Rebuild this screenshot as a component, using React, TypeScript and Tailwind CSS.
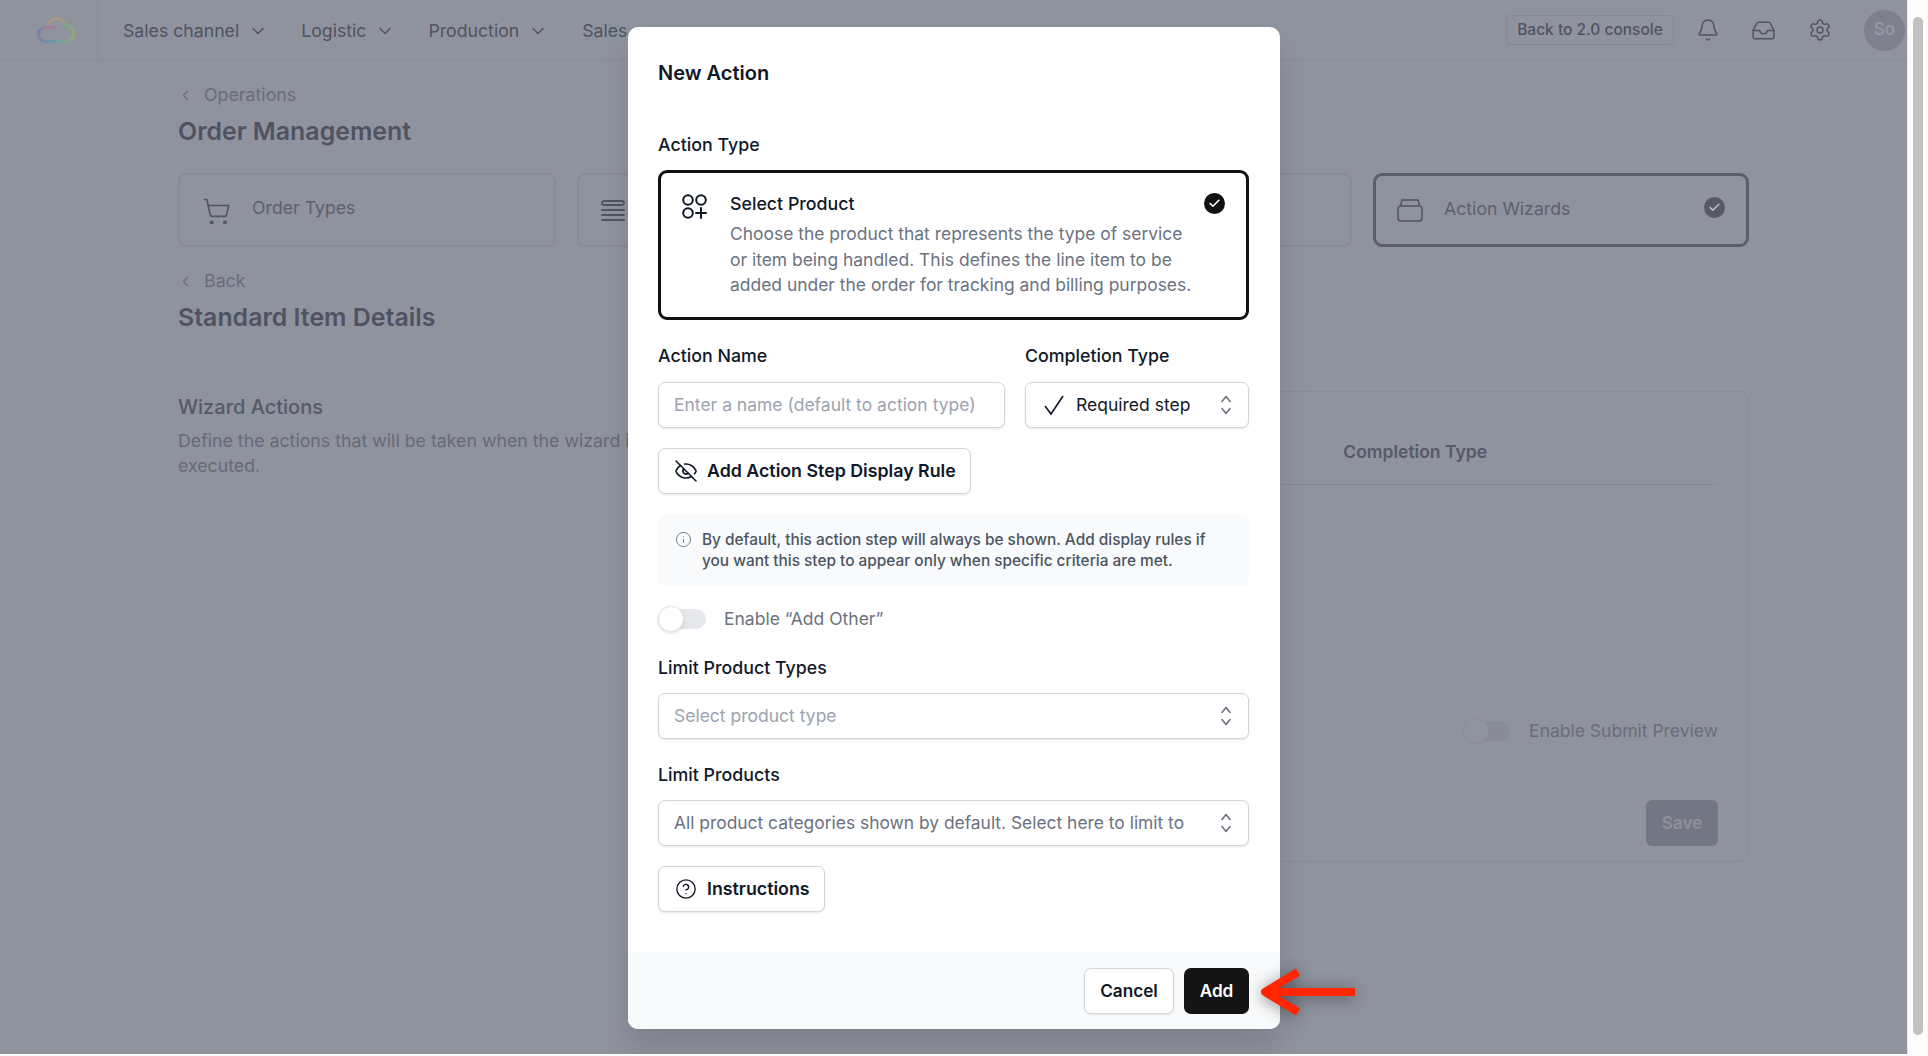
import React from "react";
import { ChevronDown, ChevronLeft, Check, Bell, Inbox, Settings, ShoppingCart, Info, CircleHelp, EyeOff } from "lucide-react";

const F = "font-['Inter','Liberation_Sans',sans-serif]";

function Updown() {
  return (
    <svg width="14" height="24" viewBox="0 0 14 24" fill="none" stroke="#6b7280" strokeWidth="1.6" strokeLinecap="round" strokeLinejoin="round" className="shrink-0">
      <path d="M3 8.5 L7 3.5 L11 8.5" />
      <path d="M3 15.5 L7 20.5 L11 15.5" />
    </svg>
  );
}

function NavItem({ label, gap }: { label: string; gap: string }) {
  return (
    <div className={`flex items-center gap-[9px] ${gap}`}>
      <span className="text-[17.7px] text-[#50545f]">{label}</span>
      <ChevronDown size={20} strokeWidth={1.6} className="text-[#50545f]" />
    </div>
  );
}

function Logo() {
  return (
    <svg width="38" height="26" viewBox="0 0 38 26" fill="none" strokeWidth="3" strokeLinecap="round">
      <defs>
        <linearGradient id="lg" x1="0" y1="0" x2="1" y2="0">
          <stop offset="0" stopColor="#7d7ea8" />
          <stop offset="0.5" stopColor="#6f9ca6" />
          <stop offset="1" stopColor="#8fa878" />
        </linearGradient>
      </defs>
      <path d="M12.5 6.5 C14 3 17 1.5 20 1.5 C24 1.5 27 4.5 28 8" stroke="#a89a82" />
      <path d="M28 8 C32.5 8 36.5 11 36.5 16 C36.5 21 32.5 24.5 28 24.5 L9 24.5 C5 24.5 1.5 21.5 1.5 17 C1.5 13 5 10.5 8.5 10.5" stroke="url(#lg)" />
      <path d="M8.5 10.5 L17.5 10.5" stroke="#a67e96" />
    </svg>
  );
}

function TopBar() {
  return (
    <div className="flex h-[61px] items-stretch border-b border-[#878b96]">
      <div className="flex w-[98px] items-center justify-center border-r border-[#8a8e99] pl-[14px]">
        <Logo />
      </div>
      <div className="flex items-center pl-[25px] pt-[2px]">
        <NavItem label="Sales channel" gap="mr-[33px]" />
        <NavItem label="Logistic" gap="mr-[33px]" />
        <NavItem label="Production" gap="mr-[34px]" />
        <span className="text-[17.7px] text-[#50545f]">Sales</span>
      </div>
      <div className="ml-auto flex items-center pr-[2px]">
        <div className="flex h-[30px] w-[168px] items-center justify-center rounded-[4px] border border-[#858994] text-[15.5px] font-medium text-[#50545f]">
          Back to 2.0 console
        </div>
        <Bell size={24} strokeWidth={1.4} className="ml-[22px] text-[#50545f]" />
        <Inbox size={25} strokeWidth={1.4} className="ml-[31px] text-[#50545f]" />
        <Settings size={24} strokeWidth={1.4} className="ml-[32px] text-[#50545f]" />
        <div className="ml-[32px] flex h-[41px] w-[41px] items-center justify-center rounded-full bg-[#7e818d] text-[17px] font-semibold text-[#9497a3]">
          So
        </div>
      </div>
    </div>
  );
}

function Crumb({ label }: { label: string }) {
  return (
    <div className="flex h-[24px] items-center text-[#696d79]">
      <ChevronLeft size={17} strokeWidth={1.5} className="-ml-[1px]" />
      <span className="ml-[10px] text-[17.8px]">{label}</span>
    </div>
  );
}

function Background() {
  return (
    <div className="h-full">
      <TopBar />
      <div className="pl-[178px] pr-[158px]">
        <div className="pt-[22px]">
          <Crumb label="Operations" />
        </div>
        <h1 className="mt-[9px] text-[24.9px] font-semibold leading-[30px] text-[#4f5361]">Order Management</h1>
        <div className="mt-[27px] flex gap-[21px]">
          <div className="flex h-[74px] w-[378px] items-start rounded-[8px] border-2 border-[#888c97] pl-[22px] pt-[22px]">
            <ShoppingCart size={29} strokeWidth={1.3} className="text-[#50545f]" />
            <span className="-mt-[2px] ml-[21px] text-[17.7px] text-[#5c606c]">Order Types</span>
          </div>
          <div className="flex h-[74px] w-[775px] rounded-[8px] border-2 border-[#888c97] pl-[22px] pt-[24px]">
            <svg width="24" height="24" viewBox="0 0 24 24" fill="none" stroke="#50545f" strokeWidth="1.8" strokeLinecap="round">
              <rect x="1" y="2" width="22" height="4" rx="2" />
              <path d="M1 11 H23 M1 16 H23 M1 21 H23" />
            </svg>
          </div>
          <div className="flex h-[74px] w-[376px] items-start rounded-[9px] border-[3px] border-[#5a5e6b] pl-[21px] pt-[21px]">
            <svg width="26" height="26" viewBox="0 0 26 26" fill="none" stroke="#50545f" strokeWidth="1.5">
              <rect x="1" y="9" width="24" height="15" rx="3" />
              <path d="M3.5 8.5 L5 3 H21 L22.5 8.5" />
            </svg>
            <span className="-mt-[1px] ml-[21px] text-[17.7px] text-[#5c606c]">Action Wizards</span>
            <div className="ml-auto mr-[21px] flex h-[21px] w-[21px] items-center justify-center rounded-full bg-[#565a67]">
              <Check size={13} strokeWidth={2.4} className="text-[#c9cbd1]" />
            </div>
          </div>
        </div>
        <div className="mt-[22px]">
          <Crumb label="Back" />
        </div>
        <h2 className="mt-[9px] text-[24.9px] font-semibold leading-[30px] text-[#4f5361]">Standard Item Details</h2>
        <div className="mt-[59px] flex">
          <div className="w-[480px] pt-[4px]">
            <div className="text-[20px] font-medium leading-[25px] text-[#565a67]">Wizard Actions</div>
            <p className="mt-[8px] text-[17.75px] leading-[25px] text-[#666a76]">
              Define the actions that will be taken when the wizard is executed.
            </p>
          </div>
          <div className="ml-auto flex h-[471px] w-[640px] flex-col rounded-[10px] border border-[#878b96] px-[30px] pt-[47px]">
            <div className="flex h-[46px] justify-end border-b border-[#858994] pr-[231px] text-[17.5px] font-semibold text-[#565a67]">
              Completion Type
            </div>
            <div className="mt-[233px] flex items-center justify-end">
              <div className="relative h-[20px] w-[47px] rounded-full bg-[#888c97]">
                <div className="absolute -top-[3px] left-0 h-[26px] w-[26px] rounded-full border border-[#8a8e99] bg-[#90949f]" />
              </div>
              <span className="ml-[19px] text-[17.5px] text-[#696d79]">Enable Submit Preview</span>
            </div>
            <div className="mt-[56px] flex justify-end">
              <div className="flex h-[46px] w-[72px] items-center justify-center rounded-[6px] bg-[#737783] text-[17.2px] font-semibold text-[#8e919c]">
                Save
              </div>
            </div>
          </div>
        </div>
      </div>
    </div>
  );
}

const fieldBox = "flex h-[46px] items-center rounded-[7px] border border-[#d1d5db] bg-white shadow-[0_1px_2px_rgba(0,0,0,0.1)]";
const label = "text-[17.8px] font-medium leading-[24px] text-[#111827]";
const ghostBtn = "flex h-[46px] items-center rounded-[7px] border border-[#d1d5db] bg-white text-[17.8px] font-semibold text-[#111827] shadow-[0_1px_2px_rgba(0,0,0,0.1)]";

function Modal() {
  return (
    <div className="absolute left-[628px] top-[27px] flex h-[1002px] w-[652px] flex-col overflow-hidden rounded-[10px] bg-white shadow-[0_20px_30px_rgba(0,0,0,0.12)]">
      <div className="flex-1 pl-[30px] pr-[31px]">
        <div className="pt-[33px] text-[20px] font-semibold leading-[26px] text-[#111827]">New Action</div>
        <div className={`mt-[47px] ${label}`}>Action Type</div>
        <div className="mt-[13px] flex h-[150px] items-start rounded-[9px] border-[3px] border-[#111111] pl-[21px] pr-[21px] pt-[18px]">
          <svg width="25" height="25" viewBox="0 0 25 25" fill="none" stroke="#111827" strokeWidth="2" className="mt-[3px] shrink-0" strokeLinecap="round">
            <circle cx="6" cy="6" r="4.8" />
            <circle cx="19" cy="6" r="4.8" />
            <circle cx="6" cy="19" r="4.8" />
            <path d="M19 14 V24 M14 19 H24" />
          </svg>
          <div className="ml-[23px] flex-1">
            <div className="text-[17.8px] font-medium leading-[25px] text-[#111827]">Select Product</div>
            <p className="mt-[5px] w-[465px] text-[17.45px] leading-[25.5px] text-[#6b7280]">
              Choose the product that represents the type of service or item being handled. This defines the line item to be added under the order for tracking and billing purposes.
            </p>
          </div>
          <div className="ml-auto mt-[2px] flex h-[21px] w-[21px] shrink-0 items-center justify-center rounded-full bg-[#111111]">
            <Check size={13} strokeWidth={3} className="text-white" />
          </div>
        </div>

        <div className="mt-[24px] flex gap-[20px]">
          <div className="w-[347px]">
            <div className={label}>Action Name</div>
            <div className={`mt-[14px] px-[15px] ${fieldBox}`}>
              <span className="text-[17.5px] text-[#9ca3af]">Enter a name (default to action type)</span>
            </div>
          </div>
          <div className="flex-1">
            <div className={label}>Completion Type</div>
            <div className={`mt-[14px] pl-[16px] pr-[15px] ${fieldBox}`}>
              <svg width="24" height="24" viewBox="0 0 24 24" fill="none" stroke="#111827" strokeWidth="1.6">
                <path d="M3 13 L9 21 L21 3" />
              </svg>
              <span className="ml-[10px] text-[17.5px] text-[#111827]">Required step</span>
              <span className="ml-auto"><Updown /></span>
            </div>
          </div>
        </div>

        <div className={`mt-[20px] w-[313px] pl-[15px] ${ghostBtn}`}>
          <EyeOff size={24} strokeWidth={1.6} />
          <span className="ml-[9px]">Add Action Step Display Rule</span>
        </div>

        <div className="mt-[21px] flex h-[71px] items-start rounded-[7px] bg-[#f9fafb] pl-[17px] pt-[14px] text-[#4b5563]">
          <Info size={17} strokeWidth={1.3} className="mt-[2px] shrink-0 text-[#6b7280]" />
          <p className="ml-[10px] w-[520px] text-[15.4px] font-medium leading-[21px]">
            By default, this action step will always be shown. Add display rules if you want this step to appear only when specific criteria are met.
          </p>
        </div>

        <div className="mt-[20px] flex items-center">
          <div className="relative h-[20px] w-[48px] rounded-full bg-[#e5e7eb]">
            <div className="absolute -top-[3px] left-0 h-[26px] w-[26px] rounded-full border border-[#e5e7eb] bg-white shadow-[0_1px_3px_rgba(0,0,0,0.15)]" />
          </div>
          <span className="ml-[18px] text-[17.5px] text-[#6b7280]">Enable “Add Other”</span>
        </div>

        <div className={`mt-[24px] ${label}`}>Limit Product Types</div>
        <div className={`mt-[13px] pl-[15px] pr-[15px] ${fieldBox}`}>
          <span className="text-[17.5px] text-[#9ca3af]">Select product type</span>
          <span className="ml-auto"><Updown /></span>
        </div>

        <div className={`mt-[24px] ${label}`}>Limit Products</div>
        <div className={`mt-[13px] pl-[15px] pr-[15px] ${fieldBox}`}>
          <span className="text-[17.4px] text-[#6b7280]">All product categories shown by default. Select here to limit to</span>
          <span className="ml-auto"><Updown /></span>
        </div>

        <div className={`mt-[20px] w-[167px] pl-[16px] ${ghostBtn}`}>
          <CircleHelp size={22} strokeWidth={1.5} />
          <span className="ml-[10px]">Instructions</span>
        </div>
      </div>
      <div className="flex h-[77px] items-start justify-end gap-[10px] bg-[#f9fafb] pr-[31px] pt-[16px]">
        <div className="flex h-[46px] w-[90px] items-center justify-center rounded-[7px] border border-[#d1d5db] bg-white text-[17.2px] font-semibold text-[#111827] shadow-[0_1px_2px_rgba(0,0,0,0.1)]">
          Cancel
        </div>
        <div className="flex h-[46px] w-[65px] items-center justify-center rounded-[7px] bg-[#141414] text-[17.2px] font-semibold text-white">
          Add
        </div>
      </div>
    </div>
  );
}

function Arrow() {
  return (
    <svg
      className="absolute left-[1258px] top-[966px] drop-shadow-[0_2px_8px_rgba(0,0,0,0.45)]"
      width="100"
      height="52"
      viewBox="0 0 100 52"
      fill="none"
      stroke="#ff2600"
      strokeWidth="8"
      strokeLinejoin="round"
    >
      <path d="M97 26 H8" />
      <path d="M40 6 L7 26 L40 46" />
    </svg>
  );
}

export default function App() {
  return (
    <div className={`${F} flex h-screen w-full overflow-hidden bg-[#fbfbfb]`}>
      <div className="relative h-[1054px] w-[1907px] shrink-0 overflow-hidden bg-[#8f939e]">
        <Background />
        <Modal />
        <Arrow />
      </div>
      <div className="flex-1 border-l border-[#e8e8e8] pl-[5px] pr-[5px] pt-[17px]">
        <div className="h-[1018px] w-[10px] rounded-full bg-[#c1c1c1]" />
      </div>
    </div>
  );
}
